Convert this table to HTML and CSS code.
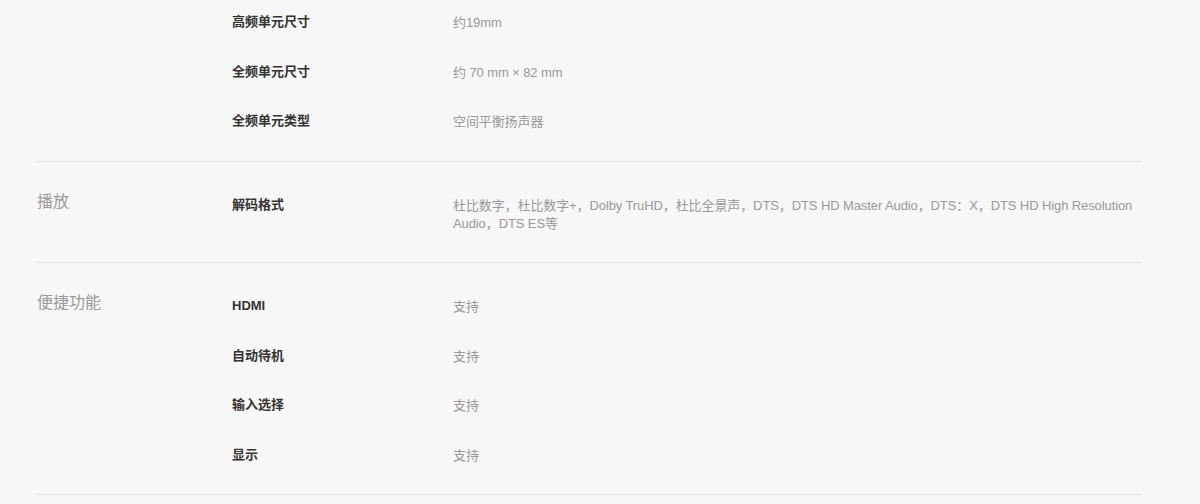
FILE: index.html
```html
<!DOCTYPE html>
<html lang="zh-CN">
  <head>
    <meta charset="UTF-8" />
    <title>规格参数</title>
    <meta name="viewport" content="width=device-width, initial-scale=1" />
    <link rel="stylesheet" href="styles.css">
  </head>
  <body>
    <div class="specs">
      <!-- 声学单元（标题已滚出视口） -->
      <section class="spec-group spec-group-cut">
        <h3 class="group-title"></h3>
        <dl class="group-rows">
          <div class="spec-row">
            <dt>高频单元尺寸</dt>
            <dd>约19mm</dd>
          </div>
          <div class="spec-row">
            <dt>全频单元尺寸</dt>
            <dd>约 70 mm × 82 mm</dd>
          </div>
          <div class="spec-row">
            <dt>全频单元类型</dt>
            <dd>空间平衡扬声器</dd>
          </div>
        </dl>
      </section>

      <section class="spec-group">
        <h3 class="group-title">播放</h3>
        <dl class="group-rows">
          <div class="spec-row">
            <dt>解码格式</dt>
            <dd>杜比数字，杜比数字+，Dolby TruHD，杜比全景声，DTS，DTS HD Master Audio，DTS：X，DTS HD High Resolution Audio，DTS ES等</dd>
          </div>
        </dl>
      </section>

      <section class="spec-group">
        <h3 class="group-title">便捷功能</h3>
        <dl class="group-rows">
          <div class="spec-row">
            <dt>HDMI</dt>
            <dd>支持</dd>
          </div>
          <div class="spec-row">
            <dt>自动待机</dt>
            <dd>支持</dd>
          </div>
          <div class="spec-row">
            <dt>输入选择</dt>
            <dd>支持</dd>
          </div>
          <div class="spec-row">
            <dt>显示</dt>
            <dd>支持</dd>
          </div>
        </dl>
      </section>
    </div>
  </body>
</html>
```

FILE: styles.css
```css
body {
  font-family: "Liberation Sans", "Noto Sans CJK SC", sans-serif;
  margin: 0;
  padding: 0;
  background: #f7f7f7;
  color: #333;
}
.specs {
  width: 1104px;
  margin-left: 37px;
}
.spec-group {
  display: flex;
  padding: 34px 0 29px;
  border-bottom: 1px solid #e2e2e2;
}
.spec-group-cut {
  padding-top: 13px;
  padding-bottom: 30px;
}
.group-title {
  width: 195px;
  flex-shrink: 0;
  margin: -3px 0 0;
  font-size: 16px;
  line-height: 18px;
  font-weight: normal;
  color: #9a9a9a;
}
.group-rows {
  flex: 1;
  display: flex;
  flex-direction: column;
  gap: 30.5px;
  margin: 0;
}
.spec-row {
  display: flex;
  font-size: 13px;
  line-height: 18px;
}
.spec-row dt {
  width: 221px;
  flex-shrink: 0;
  font-weight: bold;
  color: #333;
}
.spec-row dd {
  flex: 1;
  margin: 0;
  padding-top: 1px;
  letter-spacing: -0.1px;
  color: #999;
}
```
